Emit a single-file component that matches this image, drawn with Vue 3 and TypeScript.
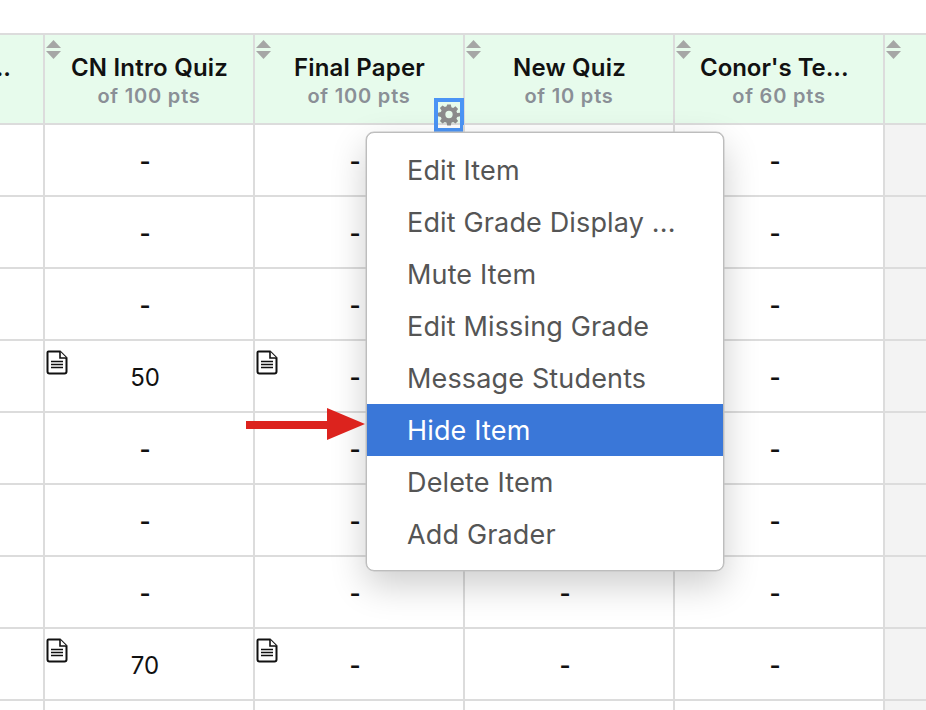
<script setup lang="ts">
interface Col { title: string; pts: string; truncated?: boolean }
const columns: Col[] = [
  { title: 'CN Intro Quiz', pts: 'of 100 pts' },
  { title: 'Final Paper', pts: 'of 100 pts' },
  { title: 'New Quiz', pts: 'of 10 pts' },
  { title: "Conor's Te...", pts: 'of 60 pts', truncated: true },
]
const rows: string[][] = [
  ['-', '-', '', '-'],
  ['-', '-', '', '-'],
  ['-', '-', '', '-'],
  ['50', '-', '', '-'],
  ['-', '-', '', '-'],
  ['-', '-', '', '-'],
  ['-', '-', '-', '-'],
  ['70', '-', '-', '-'],
  ['', '', '', ''],
]
const menu = ['Edit Item', 'Edit Grade Display ...', 'Mute Item', 'Edit Missing Grade', 'Message Students', 'Hide Item', 'Delete Item', 'Add Grader']
const hasNote = (r: number, c: number) => (r === 3 || r === 7) && c < 2
</script>

<template>
  <div class="page">
    <div class="grid">
      <div class="head first"><span class="clip">...</span></div>
      <div v-for="(c, i) in columns" :key="c.title" class="head">
        <svg class="sort" viewBox="0 0 15 19" width="15" height="19"><path d="M7.500 0 15 8H0Z M0 11H15L7.500 19Z" fill="#a6a6a6" /></svg>
        <div class="title" :class="{ truncated: c.truncated }">{{ c.title }}</div>
        <div class="pts">{{ c.pts }}</div>
        <button v-if="i === 1" class="gear" aria-label="Settings">
          <svg viewBox="0 0 24 24" width="23" height="23"><path fill="#8c8c8c" fill-rule="evenodd" d="M10 1h4l.6 3.1 1.9.8 2.6-1.8 2.8 2.8-1.8 2.6.8 1.9L24 10v4l-3.1.6-.8 1.9 1.8 2.6-2.8 2.8-2.6-1.8-1.9.8L14 24h-4l-.6-3.1-1.9-.8-2.6 1.8-2.8-2.8 1.8-2.6-.8-1.9L0 14v-4l3.100-.6.8-1.900L2.100 4.900l2.800-2.800 2.600 1.800 1.900-.8ZM12 8a4 4 0 1 0 0 8 4 4 0 0 0 0-8Z" /></svg>
        </button>
      </div>
      <div class="head tail">
        <svg class="sort" viewBox="0 0 15 19" width="15" height="19"><path d="M7.500 0 15 8H0Z M0 11H15L7.500 19Z" fill="#a6a6a6" /></svg>
      </div>

      <template v-for="(r, ri) in rows" :key="ri">
        <div class="cell first"></div>
        <div v-for="(v, ci) in r" :key="ci" class="cell">
          <svg v-if="hasNote(ri, ci)" class="note" viewBox="0 0 22 25" width="22" height="25">
            <path d="M2.500 1.500H14L20.500 8V21.500Q20.500 23.500 18.500 23.500H3.500Q1.500 23.500 1.500 21.500V2.500Q1.500 1.500 2.500 1.500Z" fill="#fff" stroke="#111" stroke-width="2" />
            <path d="M14 1.500V8H20.500" fill="#fff" stroke="#111" stroke-width="1.600" />
            <path d="M5 11.500H17M5 14.500H17M5 17.500H17" stroke="#111" stroke-width="1.600" />
          </svg>
          <span class="val" :class="{ dash: v === '-' }">{{ v }}</span>
        </div>
        <div class="cell tail"></div>
      </template>
    </div>

    <ul class="menu">
      <li v-for="m in menu" :key="m" :class="{ active: m === 'Hide Item' }"><span class="label">{{ m }}</span></li>
    </ul>

    <svg class="arrow" viewBox="0 0 122 32" width="122" height="32">
      <path d="M0 13H81V0L119 16 81 32V21H0Z" fill="#dc231e" />
    </svg>
  </div>
</template>

<style>
html, body { margin: 0; background: #fff; }
</style>

<style scoped>
.page {
  position: relative;
  width: 926px;
  height: 710px;
  overflow: hidden;
  padding-top: 33px;
  box-sizing: border-box;
  font-family: Inter, "Liberation Sans", sans-serif;
  color: #111;
}
.grid {
  display: grid;
  grid-template-columns: 45px repeat(4, 210px) 1fr;
  grid-auto-rows: 72px;
  grid-template-rows: 90px;
  border-top: 2px solid #dcdcdc;
}
.head {
  position: relative;
  background: #e7fbec;
  border-right: 2px solid #dcdcdc;
  border-bottom: 2px solid #dcdcdc;
  box-sizing: border-box;
  height: 90px;
  text-align: center;
}
.head.tail { border-right: 0; }
.first.head { overflow: hidden; }
.first.head .clip {
  position: absolute;
  left: -12px;
  top: 18px;
  font-size: 24px;
  font-weight: 600;
}
.sort { position: absolute; left: 1px; top: 5px; }
.title {
  margin-top: 18px;
  padding-left: 1px;
  font-size: 24px;
  line-height: 30px;
  font-weight: 600;
  letter-spacing: 0.2px;
}
.title.truncated {
  text-align: left;
  padding-left: 25px;
  letter-spacing: -0.05px;
}
.pts {
  font-size: 20px;
  line-height: 26px;
  font-weight: 600;
  color: #8a8f96;
  letter-spacing: 0.8px;
}
.gear {
  position: absolute;
  right: -1px;
  bottom: -9px;
  width: 30px;
  height: 34px;
  padding: 1px 0 0;
  border: 4px solid #4b94f5;
  background: transparent;
  box-sizing: border-box;
  display: flex;
  align-items: flex-start;
  justify-content: center;
}
.cell {
  position: relative;
  box-sizing: border-box;
  border-right: 2px solid #dcdcdc;
  border-bottom: 2px solid #dcdcdc;
  display: flex;
  align-items: center;
  justify-content: center;
  padding: 4px 8px 0 0;
  font-size: 24px;
}
.cell.tail { background: #f3f3f3; border-right: 0; }
.note { position: absolute; left: 1px; top: 9px; }
.val { line-height: 30px; }
.val.dash { font-weight: 600; }
.menu {
  position: absolute;
  left: 366px;
  top: 132px;
  width: 358px;
  height: 439px;
  box-sizing: border-box;
  margin: 0;
  padding: 11px 0;
  list-style: none;
  background: #fff;
  border: 1px solid #bdbdbd;
  border-radius: 8px;
  box-shadow: 0 0 0 0.5px #c4c4c4, 0 14px 36px rgba(0, 0, 0, 0.2);
}
.menu li {
  height: 52px;
  line-height: 54px;
  padding-left: 40px;
  font-size: 27px;
  color: #555;
  letter-spacing: 0.15px;
  white-space: nowrap;
}
.menu li.active { background: #3a77d8; color: #fff; }
.arrow { position: absolute; left: 246px; top: 408px; }
</style>
